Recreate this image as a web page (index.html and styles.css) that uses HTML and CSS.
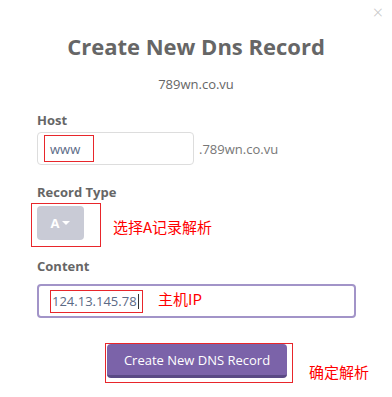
FILE: index.html
```html
<!DOCTYPE html>
<html lang="en">
<head>
    <meta charset="UTF-8">
    <title>Create New Dns Record</title>
    <link rel="stylesheet" href="styles.css">
</head>
<body>
    <div class="modal">
        <span class="close">&times;</span>
        <h1 class="title">Create New Dns Record</h1>
        <p class="domain">789wn.co.vu</p>

        <!-- Host -->
        <label class="label">Host</label>
        <div class="host-row">
            <div class="input host-input">
                <span class="mark host-mark">www</span>
            </div>
            <span class="suffix">.789wn.co.vu</span>
        </div>

        <!-- Record Type -->
        <label class="label">Record Type</label>
        <div class="type-row">
            <div class="mark type-mark">
                <button class="type-select">A <span class="caret"></span></button>
            </div>
            <span class="note">选择A记录解析</span>
        </div>

        <!-- Content -->
        <label class="label">Content</label>
        <div class="content-row">
            <div class="input content-input">
                <span class="mark content-mark">124.13.145.78<span class="cursor"></span></span>
                <span class="note">主机IP</span>
            </div>
        </div>

        <div class="submit-row">
            <div class="mark submit-mark">
                <button class="submit">Create New DNS Record</button>
            </div>
            <span class="note">确定解析</span>
        </div>
    </div>
</body>
</html>
```

FILE: styles.css
```css
/* General */
body, html {
    margin: 0;
    padding: 0;
    background: #fff;
    font-family: "Open Sans", "Liberation Sans", sans-serif;
    color: #666;
}
.modal {
    position: relative;
    width: 392px;
    height: 397px;
    box-sizing: border-box;
    padding: 0 37px;
}
.close {
    position: absolute;
    top: 0;
    right: 9px;
    font-size: 18px;
    color: #c4c4c4;
    font-weight: 300;
}

/* Heading */
.title {
    margin: 0;
    padding-top: 31px;
    text-align: center;
    font-size: 22px;
    font-weight: 700;
    color: #666;
    line-height: 30px;
}
.domain {
    margin: 14px 0 0;
    text-align: center;
    font-size: 13px;
    line-height: 18px;
    color: #666;
}

/* Fields */
.label {
    display: block;
    font-size: 13px;
    font-weight: 700;
    line-height: 16px;
    color: #666;
}
.domain + .label {
    margin-top: 19px;
}
.input {
    box-sizing: border-box;
    display: flex;
    align-items: center;
    background: #fff;
}
.mark {
    box-sizing: border-box;
    border: 1px solid #e8262b;
    flex-shrink: 0;
}
.note {
    font-family: "Noto Sans CJK SC", sans-serif;
    font-size: 15px;
    color: #f00;
    white-space: nowrap;
    flex-shrink: 0;
}

/* Host */
.host-row {
    display: flex;
    align-items: center;
    margin-top: 4px;
}
.host-input {
    width: 157px;
    height: 33px;
    border: 1px solid #ddd;
    border-radius: 4px;
    padding-left: 6px;
}
.host-mark {
    display: flex;
    align-items: center;
    width: 50px;
    height: 27px;
    padding-left: 5px;
    font-size: 13px;
    color: #5b6a86;
}
.suffix {
    margin-left: 5px;
    font-size: 13px;
    color: #777;
}
.host-row + .label {
    margin-top: 19px;
}

/* Record type */
.type-row {
    display: flex;
    align-items: center;
    margin-top: 3px;
    margin-left: -6px;
}
.type-mark {
    width: 70px;
    height: 44px;
    padding: 2px 0 0 5px;
}
.type-select {
    width: 47px;
    height: 34px;
    border: none;
    border-radius: 4px;
    background: #c9cbd6;
    color: #fff;
    font-family: inherit;
    font-size: 13px;
    font-weight: 700;
    display: flex;
    align-items: center;
    justify-content: center;
    gap: 3px;
    padding: 0;
}
.caret {
    width: 0;
    height: 0;
    border-left: 4px solid transparent;
    border-right: 4px solid transparent;
    border-top: 4px solid #fff;
}
.type-row .note {
    margin-left: 12px;
    margin-top: 2px;
}
.type-row + .label {
    margin-top: 11px;
}

/* Content */
.content-row {
    margin-top: 10px;
}
.content-input {
    width: 319px;
    height: 34px;
    border: 2px solid #a294c8;
    border-radius: 4px;
    padding-left: 11px;
}
.content-mark {
    display: flex;
    align-items: center;
    width: 93px;
    height: 23px;
    padding-left: 1px;
    font-size: 13px;
    color: #5b6a86;
}
.cursor {
    display: inline-block;
    width: 1px;
    height: 15px;
    background: #333;
    margin-left: 1px;
}
.content-input .note {
    margin-left: 15px;
    margin-top: -6px;
}

/* Submit */
.submit-row {
    display: flex;
    align-items: flex-end;
    margin-top: 25px;
    margin-left: 68px;
}
.submit-mark {
    width: 188px;
    height: 40px;
    padding: 0 0 0 1px;
}
.submit {
    width: 180px;
    height: 34px;
    border: none;
    border-bottom: 3px solid #5a4a85;
    border-radius: 4px;
    background: #7b63a9;
    color: #fff;
    font-family: inherit;
    font-size: 13px;
    padding: 0;
}
.submit-row .note {
    margin-left: 16px;
    margin-bottom: 1px;
    line-height: 20px;
}
```
